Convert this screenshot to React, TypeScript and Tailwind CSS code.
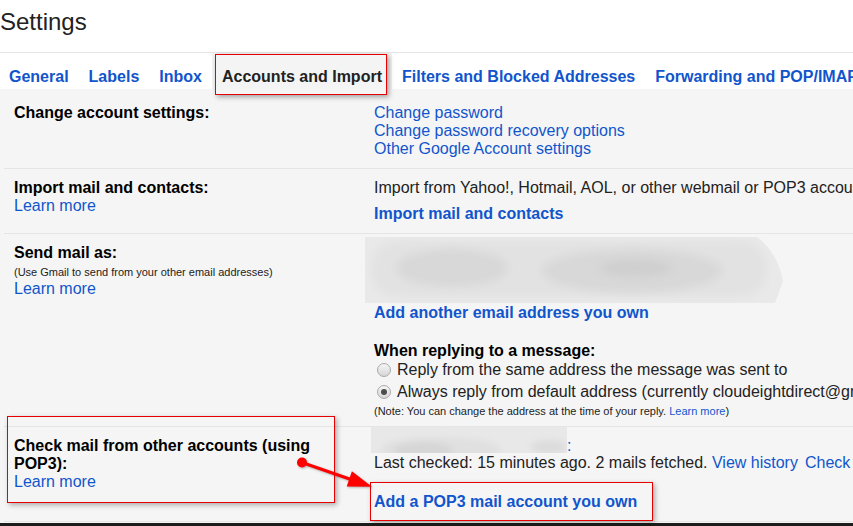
import React from 'react'

const TABS = [
  'General',
  'Labels',
  'Inbox',
  'Accounts and Import',
  'Filters and Blocked Addresses',
  'Forwarding and POP/IMAP',
]

function Radio({ checked }: { checked?: boolean }) {
  return (
    <span className="flex h-[14px] w-[14px] shrink-0 items-center justify-center rounded-full border border-[#a9a9a9] bg-linear-to-b from-[#f6f6f6] to-[#d6d6d6]">
      {checked && <span className="h-[6px] w-[6px] rounded-full bg-[#4d4d4d]" />}
    </span>
  )
}

function AddressBlur() {
  return (
    <svg width="420" height="66" viewBox="0 0 420 66" className="-ml-[9px] block">
      <defs>
        <filter id="soft" x="-20%" y="-50%" width="140%" height="200%">
          <feGaussianBlur stdDeviation="4" />
        </filter>
      </defs>
      <path d="M0 0H392Q412 14 418 44L410 66H0Z" fill="#e9e9e9" />
      <g filter="url(#soft)">
        <rect x="6" y="4" width="396" height="56" rx="26" fill="#e2e2e2" />
        <ellipse cx="87" cy="31" rx="56" ry="19" fill="#d8d8d8" />
        <ellipse cx="267" cy="34" rx="90" ry="22" fill="#d8d8d8" />
        <ellipse cx="271" cy="31" rx="36" ry="9" fill="#cfcfcf" />
      </g>
    </svg>
  )
}

function StripBlur() {
  return (
    <svg width="196" height="26" viewBox="0 0 196 26" className="-ml-[3px] block">
      <defs>
        <filter id="soft2" x="-20%" y="-50%" width="140%" height="200%">
          <feGaussianBlur stdDeviation="3" />
        </filter>
      </defs>
      <rect width="196" height="26" fill="#e8e8e8" />
      <g filter="url(#soft2)">
        <ellipse cx="70" cy="22" rx="60" ry="12" fill="#e0e0e0" />
        <ellipse cx="52" cy="24" rx="30" ry="9" fill="#d6d6d6" />
        <ellipse cx="178" cy="20" rx="18" ry="7" fill="#dcdcdc" />
      </g>
    </svg>
  )
}

export default function App() {
  return (
    <div className="relative flex h-[526px] w-[853px] flex-col overflow-hidden bg-white font-['Liberation_Sans',Arial,sans-serif] text-[16px] leading-[18px] text-[#222]">
      <div className="h-[53px] shrink-0 border-b border-[#e5e5e5] pt-[8px]">
        <h1 className="text-[24px] leading-[28px] text-[#222]">Settings</h1>
      </div>

      <div className="-ml-px flex h-[36px] shrink-0 bg-white">
        {TABS.map((tab) => (
          <div
            key={tab}
            className={`whitespace-nowrap px-[10px] pt-[15px] font-bold ${
              tab === 'Accounts and Import' ? 'bg-[#f4f4f4] text-[#222]' : 'text-[#15c]'
            }`}
          >
            {tab}
          </div>
        ))}
      </div>

      <div className="flex-1 bg-[#f5f5f5]">
        <div className="ml-[4px] flex border-b border-[#e5e5e5] pt-[15px] pb-[10px]">
          <div className="w-[370px] shrink-0 pl-[10px] font-bold text-black">Change account settings:</div>
          <div className="flex flex-col whitespace-nowrap text-[#15c]">
            <span>Change password</span>
            <span>Change password recovery options</span>
            <span>Other Google Account settings</span>
          </div>
        </div>

        <div className="ml-[4px] flex border-b border-[#e5e5e5] pt-[10px] pb-[10px]">
          <div className="w-[370px] shrink-0 pl-[10px]">
            <p className="font-bold text-black">Import mail and contacts:</p>
            <p className="text-[#15c]">Learn more</p>
          </div>
          <div className="whitespace-nowrap">
            <p>Import from Yahoo!, Hotmail, AOL, or other webmail or POP3 accounts.</p>
            <p className="mt-[8px] font-bold text-[#15c]">Import mail and contacts</p>
          </div>
        </div>

        <div className="ml-[4px] flex border-b border-[#e5e5e5] pb-[8px]">
          <div className="w-[370px] shrink-0 pt-[10px] pl-[10px]">
            <p className="font-bold text-black">Send mail as:</p>
            <p className="mt-[4px] text-[11px] leading-[13px]">(Use Gmail to send from your other email addresses)</p>
            <p className="mt-[1px] text-[#15c]">Learn more</p>
          </div>
          <div className="whitespace-nowrap pt-[3px]">
            <AddressBlur />
            <p className="mt-[1px] font-bold text-[#15c]">Add another email address you own</p>
            <p className="mt-[20px] font-bold text-black">When replying to a message:</p>
            <label className="mt-[1px] flex h-[18px] items-center gap-[6px] pl-[3px]">
              <Radio />
              <span>Reply from the same address the message was sent to</span>
            </label>
            <label className="mt-[4px] flex h-[18px] items-center gap-[6px] pl-[3px]">
              <Radio checked />
              <span>Always reply from default address (currently cloudeightdirect@gmail.com)</span>
            </label>
            <p className="mt-[4px] text-[11px] leading-[13px]">
              (Note: You can change the address at the time of your reply. <span className="text-[#15c]">Learn more</span>)
            </p>
          </div>
        </div>

        <div className="ml-[4px] flex border-b border-[#e5e5e5] pb-[10px]">
          <div className="w-[370px] shrink-0 pt-[10px] pr-[40px] pl-[10px]">
            <p className="font-bold text-black">Check mail from other accounts (using POP3):</p>
            <p className="text-[#15c]">Learn more</p>
          </div>
          <div className="whitespace-nowrap">
            <div className="flex items-start">
              <StripBlur />
              <span className="relative top-[10px] text-[#15c]">:</span>
            </div>
            <p className="mt-[1px]">
              Last checked: 15 minutes ago. 2 mails fetched. <span className="text-[#15c]">View history</span>
              <span className="ml-[7px] text-[#15c]">Check mail now</span>
            </p>
            <p className="mt-[21px] font-bold text-[#15c]">Add a POP3 mail account you own</p>
          </div>
        </div>
        <div className="h-[1px]" />
        <div className="h-[3px] bg-[#1c1c1c]" />
      </div>

      {/* annotation boxes */}
      <div className="pointer-events-none absolute top-[54px] left-[215px] h-[41px] w-[172px] border border-[#e60000] shadow-[2px_2px_5px_rgba(0,0,0,0.35)]" />
      <div className="pointer-events-none absolute top-[416px] left-[7px] h-[87px] w-[328px] border border-[#e60000] shadow-[2px_2px_5px_rgba(0,0,0,0.3)]" />
      <div className="pointer-events-none absolute top-[482px] left-[370px] h-[39px] w-[283px] border border-[#e60000] shadow-[2px_2px_5px_rgba(0,0,0,0.3)]" />

      <svg
        width="853"
        height="526"
        className="pointer-events-none absolute top-0 left-0 drop-shadow-[1px_1px_1px_rgba(0,0,0,0.3)]"
      >
        <circle cx="302" cy="462.5" r="5" fill="#f00" />
        <line x1="302" y1="462.5" x2="351" y2="479.5" stroke="#f00" strokeWidth="3" />
        <polygon points="372,486.7 346.7,486.5 351.9,471.3" fill="#f00" />
      </svg>
    </div>
  )
}
